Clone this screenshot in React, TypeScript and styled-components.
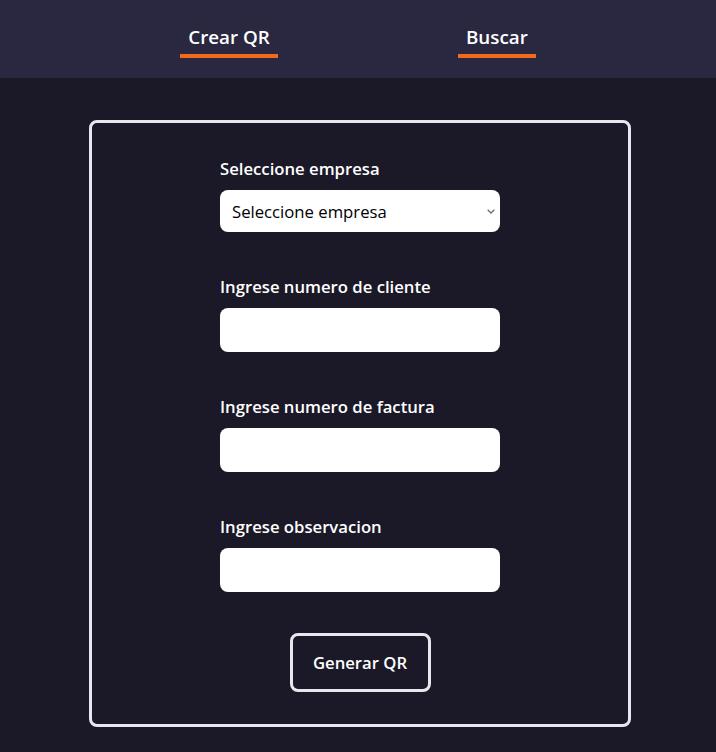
import React from "react";
import styled, { createGlobalStyle } from "styled-components";

const GlobalStyle = createGlobalStyle`
  * { box-sizing: border-box; }
  body {
    margin: 0;
    background: #1b1927;
    font-family: "Open Sans", "Noto Sans", sans-serif;
  }
`;

const Header = styled.header`
  height: 78px;
  background: #2a2740;
  display: flex;
  justify-content: space-evenly;
  align-items: flex-start;
`;

const NavItem = styled.a<{ $active?: boolean }>`
  margin-top: 25px;
  padding: 0 8px 5px;
  font-size: 18.8px;
  line-height: 24px;
  font-weight: 600;
  color: #ffffff;
  text-decoration: none;
  border-bottom: 4px solid #f26b1d;
  cursor: pointer;
`;

const Main = styled.main`
  padding: 42px 0 0 89px;
`;

const Card = styled.section`
  width: 542px;
  height: 607px;
  border: 3px solid #e8e7ee;
  border-radius: 8px;
  padding-top: 34px;
  display: flex;
  flex-direction: column;
  align-items: center;
`;

const Form = styled.form`
  width: 280px;
  display: flex;
  flex-direction: column;
`;

const Field = styled.div`
  display: flex;
  flex-direction: column;
  gap: 9px;
  & + & {
    margin-top: 43px;
  }
`;

const Label = styled.label`
  font-size: 16.7px;
  line-height: 24px;
  font-weight: 600;
  color: #ffffff;
`;

const SelectWrap = styled.div`
  position: relative;
  height: 42px;
`;

const Select = styled.select`
  appearance: none;
  -webkit-appearance: none;
  width: 100%;
  height: 42px;
  border: none;
  border-radius: 8px;
  background: #ffffff;
  padding: 0 24px 0 12px;
  font-family: inherit;
  font-size: 16.7px;
  color: #000000;
  outline: none;
`;

const Chevron = styled.svg`
  position: absolute;
  right: 5px;
  top: 19px;
  width: 8px;
  height: 5px;
  pointer-events: none;
`;

const Input = styled.input`
  width: 100%;
  height: 44px;
  border: none;
  border-radius: 8px;
  background: #ffffff;
  padding: 0 12px;
  font-family: inherit;
  font-size: 16px;
  outline: none;
`;

const SubmitButton = styled.button`
  align-self: center;
  margin-top: 41px;
  width: 141px;
  height: 59px;
  background: transparent;
  border: 3px solid #e8e7ee;
  border-radius: 8px;
  color: #ffffff;
  font-family: inherit;
  font-size: 16.7px;
  font-weight: 600;
  cursor: pointer;
`;

export default function App() {
  return (
    <>
      <GlobalStyle />
      <Header>
        <NavItem $active>Crear QR</NavItem>
        <NavItem>Buscar</NavItem>
      </Header>
      <Main>
        <Card>
          <Form onSubmit={(e) => e.preventDefault()}>
            <Field>
              <Label htmlFor="empresa">Seleccione empresa</Label>
              <SelectWrap>
                <Select id="empresa" defaultValue="">
                  <option value="">Seleccione empresa</option>
                </Select>
                <Chevron viewBox="0 0 8 5">
                  <path d="M0.7 0.7 L4 4 L7.3 0.7" fill="none" stroke="#6d6d6d" strokeWidth="1.3" />
                </Chevron>
              </SelectWrap>
            </Field>
            <Field>
              <Label htmlFor="cliente">Ingrese numero de cliente</Label>
              <Input id="cliente" type="text" />
            </Field>
            <Field>
              <Label htmlFor="factura">Ingrese numero de factura</Label>
              <Input id="factura" type="text" />
            </Field>
            <Field>
              <Label htmlFor="obs">Ingrese observacion</Label>
              <Input id="obs" type="text" />
            </Field>
            <SubmitButton type="submit">Generar QR</SubmitButton>
          </Form>
        </Card>
      </Main>
    </>
  );
}
